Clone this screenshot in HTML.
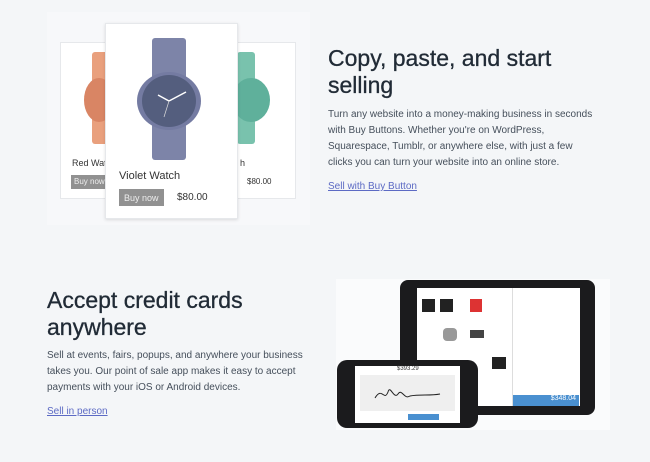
<!DOCTYPE html>
<html><head><style>
*{margin:0;padding:0;box-sizing:border-box}
body{width:650px;height:462px;background:#f4f6f8;font-family:"Liberation Sans",sans-serif;color:#212b36;position:relative;overflow:hidden}
.abs{position:absolute}
h2{font-size:23px;line-height:27px;font-weight:normal;color:#212b36;-webkit-text-stroke:0.3px #212b36}
p{font-size:10px;line-height:16px;color:#454f5b;white-space:nowrap}
a{font-size:10px;color:#5c6ac4;text-decoration:underline;white-space:nowrap}
.card{background:#fff;border:1px solid #e6e8eb}
.btn{background:#919191;color:#eee;font-size:8px;white-space:nowrap;overflow:hidden}
</style></head><body>
<div class="abs" style="left:47px;top:12px;width:263px;height:213px;background:#f7f8fa"></div>
<div class="abs card" style="left:60px;top:42px;width:236px;height:157px"></div>
<div class="abs" style="left:92px;top:52px;width:18px;height:92px;background:#e9a07d;border-radius:3px"></div>
<div class="abs" style="left:84px;top:78px;width:30px;height:44px;background:#d98564;border-radius:50%"></div>
<div class="abs" style="left:72px;top:158px;font-size:9px;color:#333">Red Watc</div>
<div class="abs btn" style="left:71px;top:175px;width:35px;height:14px;padding:2px 3px">Buy now</div>
<div class="abs" style="left:237px;top:52px;width:18px;height:92px;background:#79c2ad;border-radius:3px"></div>
<div class="abs" style="left:232px;top:78px;width:38px;height:44px;background:#5fb09b;border-radius:50%"></div>
<div class="abs" style="left:240px;top:158px;font-size:9px;color:#333">h</div>
<div class="abs" style="left:247px;top:177px;font-size:8px;color:#333">$80.00</div>
<div class="abs card" style="left:105px;top:23px;width:133px;height:196px;box-shadow:0 1px 3px rgba(0,0,0,.12)"></div>
<div class="abs" style="left:152px;top:38px;width:34px;height:122px;background:#7d84a8;border-radius:3px"></div>
<div class="abs" style="left:137px;top:72px;width:64px;height:58px;background:#747ba2;border-radius:50%"></div>
<div class="abs" style="left:142px;top:75px;width:54px;height:52px;background:#545e7e;border-radius:50%"></div>
<svg class="abs" style="left:142px;top:75px" width="54" height="52"><line x1="27" y1="26" x2="44" y2="17" stroke="#fff" stroke-width="1.5"/><line x1="27" y1="26" x2="16" y2="20" stroke="#fff" stroke-width="1.5"/><line x1="27" y1="26" x2="22" y2="42" stroke="#ddd" stroke-width=".7"/></svg>
<div class="abs" style="left:119px;top:170px;font-size:11px;color:#333">Violet Watch</div>
<div class="abs btn" style="left:119px;top:189px;width:45px;height:17px;padding:4px 5px;font-size:9px">Buy now</div>
<div class="abs" style="left:177px;top:192px;font-size:10px;color:#333">$80.00</div>

<div class="abs" style="left:328px;top:45px;width:280px"><h2>Copy, paste, and start<br>selling</h2></div>
<div class="abs" style="left:328px;top:107px"><p>Turn any website into a money-making business in seconds<br>with Buy Buttons. Whether you're on WordPress,<br>Squarespace, Tumblr, or anywhere else, with just a few<br>clicks you can turn your website into an online store.</p></div>
<div class="abs" style="left:328px;top:176px"><a>Sell with Buy Button</a></div>

<div class="abs" style="left:47px;top:287px;width:260px"><h2>Accept credit cards<br>anywhere</h2></div>
<div class="abs" style="left:47px;top:348px"><p>Sell at events, fairs, popups, and anywhere your business<br>takes you. Our point of sale app makes it easy to accept<br>payments with your iOS or Android devices.</p></div>
<div class="abs" style="left:47px;top:401px"><a>Sell in person</a></div>

<div class="abs" style="left:336px;top:279px;width:274px;height:151px;background:#fafbfc"></div>
<div class="abs" style="left:400px;top:280px;width:195px;height:135px;background:#1b1b1d;border-radius:8px"></div>
<div class="abs" style="left:417px;top:288px;width:163px;height:118px;background:#fff"></div>
<div class="abs" style="left:512px;top:288px;width:1px;height:118px;background:#ddd"></div>
<div class="abs" style="left:513px;top:395px;width:66px;height:11px;background:#4a90d0;color:#fff;font-size:7px;text-align:right;padding-right:3px">$348.04</div>
<div class="abs" style="left:422px;top:299px;width:13px;height:13px;background:#222"></div>
<div class="abs" style="left:440px;top:299px;width:13px;height:13px;background:#222"></div>
<div class="abs" style="left:470px;top:299px;width:12px;height:13px;background:#d33"></div>
<div class="abs" style="left:443px;top:328px;width:14px;height:13px;background:#999;border-radius:4px"></div>
<div class="abs" style="left:470px;top:330px;width:14px;height:8px;background:#444"></div>
<div class="abs" style="left:492px;top:357px;width:14px;height:12px;background:#222"></div>
<div class="abs" style="left:337px;top:360px;width:141px;height:68px;background:#1b1b1d;border-radius:10px"></div>
<div class="abs" style="left:355px;top:366px;width:105px;height:57px;background:#fff"></div>
<div class="abs" style="left:360px;top:375px;width:95px;height:36px;background:#efefef"></div>
<div class="abs" style="left:397px;top:366px;font-size:6px;color:#333">$393.29</div>
<svg class="abs" style="left:370px;top:380px" width="80" height="28"><path d="M5 18 C12 6 14 22 18 12 C20 4 24 20 28 14 C32 8 34 20 40 16 C50 14 60 16 70 14" fill="none" stroke="#222" stroke-width="1"/></svg>
<div class="abs" style="left:408px;top:414px;width:31px;height:6px;background:#4a90d0"></div>
</body></html>
